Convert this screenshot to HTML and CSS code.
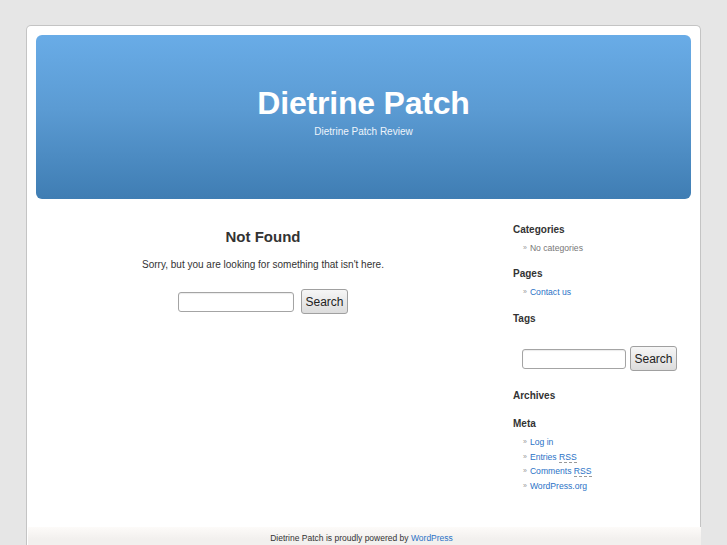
FILE: index.html
```html
<!DOCTYPE html>
<html>
<head>
<meta charset="utf-8">
<title>Dietrine Patch</title>
<link rel="stylesheet" href="styles.css">
</head>
<body>
<div class="page">
  <header class="header">
    <h1 class="site-title">Dietrine Patch</h1>
    <div class="site-desc">Dietrine Patch Review</div>
  </header>
  <div class="content">
    <main class="main">
      <h2 class="nf-title">Not Found</h2>
      <p class="nf-text">Sorry, but you are looking for something that isn't here.</p>
      <form class="search main-search">
        <input class="search-input main-input" type="text">
        <button class="search-btn" type="button">Search</button>
      </form>
    </main>
    <aside class="sidebar">
      <h3 class="w-title">Categories</h3>
      <ul class="w-list"><li class="muted">No categories</li></ul>
      <h3 class="w-title">Pages</h3>
      <ul class="w-list"><li><a href="#">Contact us</a></li></ul>
      <h3 class="w-title tags">Tags</h3>
      <form class="search side-search">
        <input class="search-input side-input" type="text">
        <button class="search-btn" type="button">Search</button>
      </form>
      <h3 class="w-title archives">Archives</h3>
      <h3 class="w-title meta">Meta</h3>
      <ul class="w-list meta-list">
        <li><a href="#">Log in</a></li>
        <li><a href="#">Entries <abbr>RSS</abbr></a></li>
        <li><a href="#">Comments <abbr>RSS</abbr></a></li>
        <li><a href="#">WordPress.org</a></li>
      </ul>
    </aside>
  </div>
  <footer class="footer">
    Dietrine Patch is proudly powered by <a href="#">WordPress</a>
  </footer>
</div>
</body>
</html>
```

FILE: styles.css
```css
html, body {
  margin: 0;
  padding: 0;
}
body {
  background: #e6e6e6;
  font-family: "Liberation Sans", Arial, sans-serif;
  color: #333;
  overflow: hidden;
}
.page {
  margin: 25px 0 0 26px;
  width: 673px;
  background: #fff;
  border: 1px solid #c4c4c4;
  border-bottom: none;
  border-radius: 5px 5px 0 0;
  padding-top: 9px;
}
.header {
  margin: 0 9px;
  height: 164px;
  border-radius: 6px;
  background: linear-gradient(#69ace7, #5b9bd3 45%, #3f7db3);
  text-align: center;
  color: #fff;
  overflow: hidden;
}
.site-title {
  margin: 50px 0 0;
  font-size: 32px;
  line-height: 36px;
  font-weight: bold;
  letter-spacing: -0.2px;
}
.site-desc {
  margin-top: 5px;
  font-size: 10px;
  line-height: 12px;
  color: #eef4fb;
}
.content {
  display: flex;
  padding: 0 9px;
}
.main {
  width: 454px;
  text-align: center;
}
.nf-title {
  margin: 28px 0 0;
  font-size: 15px;
  line-height: 20px;
  font-weight: bold;
  color: #333;
}
.nf-text {
  margin: 11px 0 0;
  font-size: 10px;
  line-height: 14px;
}
.search {
  display: flex;
  align-items: center;
  margin: 0;
}
.main-search {
  justify-content: center;
  gap: 7px;
  margin-top: 17px;
}
.search-input {
  box-sizing: border-box;
  height: 20px;
  border: 1px solid #a4a4a4;
  border-radius: 3px;
  background: #fff;
  padding: 0 3px;
  margin: 0;
  box-shadow: inset 0 1px 1px rgba(0,0,0,0.08);
}
.main-input {
  width: 116px;
}
.search-btn {
  box-sizing: border-box;
  height: 25px;
  width: 47px;
  padding: 0;
  margin: 0;
  border: 1px solid #a0a0a0;
  border-radius: 3px;
  background: linear-gradient(#f6f6f6, #dcdcdc);
  font-family: "Liberation Sans", Arial, sans-serif;
  font-size: 12px;
  color: #222;
}
.sidebar {
  margin-left: 23px;
  width: 177px;
  padding-bottom: 33px;
}
.w-title {
  margin: 12px 0 0;
  font-size: 10px;
  line-height: 14px;
  font-weight: bold;
  color: #333;
}
.w-title:first-child {
  margin-top: 24px;
}
.w-title.tags {
  margin-top: 13px;
}
.w-list {
  list-style: none;
  margin: 4px 0 0;
  padding: 0 0 0 10px;
  font-size: 8.6px;
  line-height: 14px;
}
.w-list li::before {
  content: "\00bb";
  color: #999;
  font-size: 7px;
  margin-right: 3px;
  vertical-align: 1px;
}
.w-list a {
  color: #2a72c6;
  text-decoration: none;
}
.muted {
  color: #777;
}
.side-search {
  margin: 20px 0 0 9px;
  gap: 4px;
}
.side-input {
  width: 104px;
}
.archives {
  margin-top: 18px;
}
.meta {
  margin-top: 14px;
}
.meta-list {
  line-height: 14.67px;
}
abbr {
  text-decoration: none;
  border-bottom: 1px dashed #999;
}
.footer {
  margin: 0 -1px 0 1px;
  padding: 6px 6px 20px 0;
  background: linear-gradient(#fdfbf9, #f2f0ee 12px);
  text-align: center;
  font-size: 8.5px;
  line-height: 10px;
  color: #333;
}
.footer a {
  color: #2a72c6;
  text-decoration: none;
}
```
